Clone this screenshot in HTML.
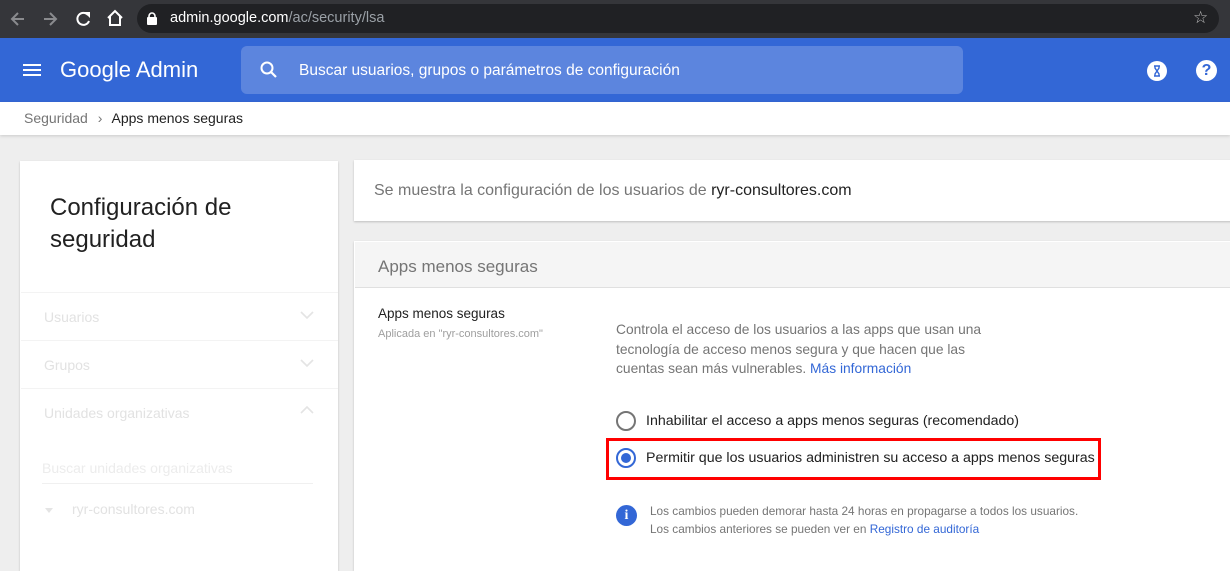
<!DOCTYPE html>
<html><head><meta charset="utf-8"><style>
*{margin:0;padding:0;box-sizing:border-box}
body{width:1230px;height:561px;overflow:hidden;background:#eeeeee;font-family:"Liberation Sans",Arial,sans-serif;position:relative}
.abs{position:absolute}
.chrome{left:0;top:0;width:1230px;height:38px;background:#35363a}
.url{left:137px;top:4px;width:1082px;height:29px;background:#202124;border-radius:15px}
.hdr{left:0;top:38px;width:1230px;height:64px;background:#3367d6}
.search{left:241px;top:46px;width:722px;height:48px;background:#5c85de;border-radius:6px}
.bc{left:0;top:102px;width:1230px;height:33px;background:#fff;box-shadow:0 1px 3px rgba(0,0,0,.15)}
.card{background:#fff;box-shadow:0 1px 2px rgba(0,0,0,.2)}
.t{white-space:nowrap}
</style></head><body>
<div class="abs chrome"></div>
<svg class="abs" style="left:8px;top:9px" width="20" height="20" viewBox="0 0 20 20"><path d="M16 10H5M10 4L4 10l6 6" stroke="#8a8b8e" stroke-width="2" fill="none"/></svg>
<svg class="abs" style="left:40px;top:9px" width="20" height="20" viewBox="0 0 20 20"><path d="M4 10h11M10 4l6 6-6 6" stroke="#8a8b8e" stroke-width="2" fill="none"/></svg>
<svg class="abs" style="left:73px;top:9px" width="20" height="20" viewBox="0 0 20 20"><path d="M15 6A6 6 0 1 0 16 12" stroke="#fff" stroke-width="2" fill="none"/><path d="M11 3h6v6z" fill="#fff"/></svg>
<svg class="abs" style="left:105px;top:8px" width="20" height="20" viewBox="0 0 20 20"><path d="M3 10L10 3l7 7M5 8v9h10V8" stroke="#fff" stroke-width="2" fill="none"/></svg>
<div class="abs url"></div>
<svg class="abs" style="left:147px;top:12px" width="10" height="13" viewBox="0 0 10 13"><rect x="0" y="5" width="10" height="8" rx="1" fill="#fff"/><path d="M2 6V4a3 3 0 0 1 6 0v2" stroke="#fff" stroke-width="1.6" fill="none"/></svg>
<div class="abs t" style="left:170px;top:10px;font-size:14.5px;color:#fff">admin.google.com<span style="color:#9aa0a6">/ac/security/lsa</span></div>
<div class="abs t" style="left:1193px;top:8px;font-size:17px;color:#bbb">☆</div>
<div class="abs hdr"></div>
<div class="abs" style="left:23px;top:64px;width:18px;height:2px;background:#fff;box-shadow:0 5px 0 #fff,0 10px 0 #fff"></div>
<div class="abs t" style="left:60px;top:57px;font-size:22px;color:#fff">Google Admin</div>
<div class="abs search"></div>
<svg class="abs" style="left:259px;top:60px" width="20" height="20" viewBox="0 0 20 20"><circle cx="8" cy="8" r="5.5" stroke="#fff" stroke-width="2" fill="none"/><path d="M12 12l5 5" stroke="#fff" stroke-width="2.2"/></svg>
<div class="abs t" style="left:299px;top:62px;font-size:15.5px;color:#fff">Buscar usuarios, grupos o parámetros de configuración</div>
<div class="abs" style="left:1147px;top:61px;width:20px;height:20px;border-radius:50%;background:#fff"></div>
<svg class="abs" style="left:1152px;top:65px" width="10" height="12" viewBox="0 0 10 12"><path d="M2 1h6M2 11h6M3 1v2l2 3-2 3v2M7 1v2L5 6l2 3v2" stroke="#3367d6" stroke-width="1.4" fill="none"/></svg>
<div class="abs" style="left:1196px;top:60px;width:21px;height:21px;border-radius:50%;background:#fff;color:#3367d6;font-weight:bold;font-size:16px;text-align:center;line-height:21px">?</div>
<div class="abs bc"></div>
<div class="abs t" style="left:24px;top:110px;font-size:14px;color:#757575">Seguridad <span style="margin:0 6px">›</span> <span style="color:#212121">Apps menos seguras</span></div>

<div class="abs card" style="left:20px;top:161px;width:318px;height:410px"></div>
<div class="abs" style="left:50px;top:192px;font-size:24px;line-height:32px;color:#212121">Configuración de<br>seguridad</div>
<div class="abs" style="left:21px;top:292px;width:317px;height:1px;background:#f3f3f3"></div>
<div class="abs" style="left:21px;top:340px;width:317px;height:1px;background:#f3f3f3"></div>
<div class="abs" style="left:21px;top:388px;width:317px;height:1px;background:#f3f3f3"></div>
<div class="abs t" style="left:44px;top:309px;font-size:14px;color:#e2e2e2">Usuarios</div>
<div class="abs t" style="left:44px;top:357px;font-size:14px;color:#e2e2e2">Grupos</div>
<div class="abs t" style="left:44px;top:405px;font-size:14px;color:#e2e2e2">Unidades organizativas</div>
<svg class="abs" style="left:300px;top:310px" width="14" height="60" viewBox="0 0 14 60"><path d="M1 2l6 6 6-6M1 50l6 6 6-6" stroke="#e4e4e4" stroke-width="1.6" fill="none"/></svg>
<svg class="abs" style="left:300px;top:405px" width="14" height="10" viewBox="0 0 14 10"><path d="M1 8l6-6 6 6" stroke="#e4e4e4" stroke-width="1.6" fill="none"/></svg>
<div class="abs t" style="left:42px;top:460px;font-size:14px;color:#ececec">Buscar unidades organizativas</div>
<div class="abs" style="left:42px;top:483px;width:271px;height:1px;background:#f0f0f0"></div>
<div class="abs" style="left:45px;top:508px;border:4px solid transparent;border-top:5px solid #e4e4e4"></div>
<div class="abs t" style="left:72px;top:501px;font-size:14px;color:#e2e2e2">ryr-consultores.com</div>

<div class="abs card" style="left:354px;top:160px;width:880px;height:61px"></div>
<div class="abs t" style="left:374px;top:182px;font-size:16px;color:#757575">Se muestra la configuración de los usuarios de <span style="color:#212121">ryr-consultores.com</span></div>

<div class="abs card" style="left:354px;top:241px;width:880px;height:330px"></div>
<div class="abs" style="left:355px;top:242px;width:875px;height:46px;background:#f5f5f5;border-bottom:1px solid #e0e0e0"></div>
<div class="abs t" style="left:378px;top:257px;font-size:17px;color:#757575">Apps menos seguras</div>
<div class="abs t" style="left:378px;top:306px;font-size:13.5px;color:#212121">Apps menos seguras</div>
<div class="abs t" style="left:378px;top:328px;font-size:11px;color:#9e9e9e">Aplicada en "ryr-consultores.com"</div>
<div class="abs" style="left:616px;top:320px;font-size:13.8px;line-height:19.5px;color:#757575;width:390px">Controla el acceso de los usuarios a las apps que usan una tecnología de acceso menos segura y que hacen que las cuentas sean más vulnerables. <span style="color:#3367d6">Más información</span></div>
<div class="abs" style="left:616px;top:411px;width:20px;height:20px;border-radius:50%;border:2px solid #757575"></div>
<div class="abs t" style="left:646px;top:413px;font-size:14.2px;color:#212121">Inhabilitar el acceso a apps menos seguras (recomendado)</div>
<div class="abs" style="left:606px;top:438px;width:495px;height:42px;border:3px solid #f00"></div>
<div class="abs" style="left:616px;top:448px;width:20px;height:20px;border-radius:50%;border:2px solid #3367d6"></div>
<div class="abs" style="left:621px;top:453px;width:10px;height:10px;border-radius:50%;background:#3367d6"></div>
<div class="abs t" style="left:646px;top:450px;font-size:14.2px;color:#212121">Permitir que los usuarios administren su acceso a apps menos seguras</div>
<div class="abs" style="left:616px;top:505px;width:21px;height:21px;border-radius:50%;background:#3367d6;color:#fff;font-weight:bold;font-size:14px;text-align:center;line-height:21px;font-family:'Liberation Serif',serif">i</div>
<div class="abs t" style="left:650px;top:502px;font-size:11.8px;line-height:18px;color:#757575">Los cambios pueden demorar hasta 24 horas en propagarse a todos los usuarios.<br>Los cambios anteriores se pueden ver en <span style="color:#3367d6">Registro de auditoría</span></div>
</body></html>
